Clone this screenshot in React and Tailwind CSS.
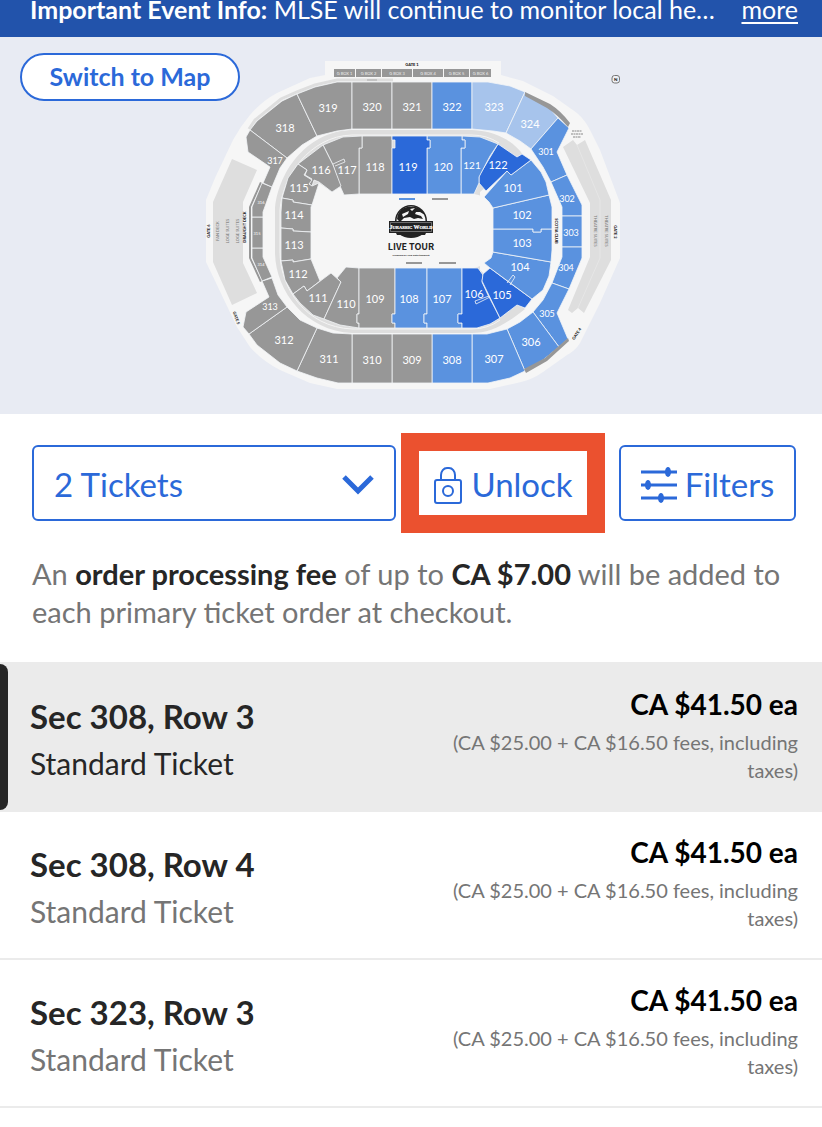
import React from "react";

const GREY = "#979797";
const BLUE = "#5a92df";
const DEEP = "#2b69d9";
const PALE = "#a7c4ec";

const sections = [
  ["318", GREY, "250,130 257,121 282,101 297,94 317,136 302,145 287,158", 285, 132],
  ["319", GREY, "297,94 315,87 337,82 352,82 352,129 337,131 317,136", 328, 112],
  ["320", GREY, "352,82 392,82 392,129 352,129", 372, 111],
  ["321", GREY, "392,82 432,82 432,129 392,129", 412, 111],
  ["322", BLUE, "432,82 472,82 472,129 432,129", 452, 111],
  ["323", PALE, "472,82 488,82 510,86 525,92 506,133 493,131 472,129", 494, 111],
  ["324", PALE, "525,92 546,104 558,118 531,149 520,141 506,133", 530, 128],
  ["301", BLUE, "558,118 569,128 557,152 567,175 551,182 543,167 531,149", 546, 155, 9],
  ["302", BLUE, "567,175 582,205 582,216 562,216 562,207 551,182", 567, 202, 9],
  ["303", BLUE, "562,216 582,216 582,247 562,247", 571, 236, 9],
  ["304", BLUE, "562,247 582,247 582,258 569,289 552,283 562,257", 566, 271, 9],
  ["305", BLUE, "552,283 569,289 557,313 568,339 559,347 533,312 543,300", 547, 317, 9],
  ["306", BLUE, "533,312 559,347 543,360 525,371 507,329 520,322", 531, 346],
  ["307", BLUE, "507,329 525,371 510,378 488,383 472,383 472,334 487,334", 494, 363],
  ["308", BLUE, "432,334 472,334 472,383 432,383", 452, 364],
  ["309", GREY, "392,334 432,334 432,383 392,383", 412, 364],
  ["310", GREY, "352,334 392,334 392,383 352,383", 372, 364],
  ["311", GREY, "352,334 352,383 338,383 317,378 297,371 317,328 333,333", 329, 363],
  ["312", GREY, "249,334 257,345 280,363 297,371 317,328 300,320 287,307", 284, 344],
  ["313", GREY, "249,334 243,327 246,312 269,297 262,281 272,278 278,295 287,307", 270, 310, 9],
  ["314", GREY, "252,248 263,248 263,257 272,277 262,281 252,258", 261, 266, 4],
  ["315", GREY, "252,217 263,217 263,248 252,248", 257, 235, 4],
  ["316", GREY, "252,217 252,207 262,183 272,187 263,212 263,217", 261, 204, 4],
  ["317", GREY, "250,130 246,137 248,152 270,167 263,183 272,187 280,168 287,158", 275, 164, 9],
  ["118", GREY, "362,136 392,136 392,194 359,194 359,148 362,148", 375, 171],
  ["117", GREY, "323,145 343,137 362,136 362,148 359,148 359,194 344,195 340,186 333,165", 347, 174],
  ["116", GREY, "298,164 323,145 333,165 341,186 332,192 319,182 314,180 312,186 309,184 312,179 305,175 307,170", 321, 174],
  ["115", GREY, "298,164 307,170 304,175 312,180 309,184 312,186 319,183 312,205 293,202 293,200 282,198 288,178", 299, 192],
  ["114", GREY, "282,198 293,200 293,202 312,205 311,207 311,232 293,231 293,229 281,228 281,212", 294, 219],
  ["113", GREY, "281,228 293,229 293,231 311,232 311,259 293,262 293,260 281,261", 294, 249],
  ["112", GREY, "281,261 293,260 293,262 311,259 320,281 307,291 304,286 293,294 285,280", 298, 278],
  ["111", GREY, "293,294 304,286 307,291 331,273 341,282 324,319 313,315 300,303", 318, 302],
  ["110", GREY, "341,282 337,278 346,267 359,268 359,314 357,314 357,323 359,323 359,328 340,325 324,319", 346, 308],
  ["109", GREY, "359,268 395,268 395,314 392,314 392,323 395,323 395,328 359,328 359,323 357,323 357,314 359,314", 375, 303],
  ["108", BLUE, "395,268 427,268 427,314 424,314 424,323 427,323 427,328 395,328 395,323 392,323 392,314 395,314", 409, 303],
  ["107", BLUE, "427,268 462,268 462,314 458,314 458,323 462,323 462,328 427,328 427,323 424,323 424,314 427,314", 442, 303],
  ["106", DEEP, "462,268 478,268 483,275 482,282 488,295 500,318 490,324 477,328 462,328 462,323 458,323 458,314 462,314", 474, 298],
  ["105", DEEP, "490,268 483,274 482,281 500,318 517,305 525,308 532,299 510,283", 502, 299],
  ["104", BLUE, "493,252 551,262 549,276 543,290 532,299 490,268 484,263 491,258", 520, 271],
  ["103", BLUE, "493,229 533,229 533,232 541,232 541,229 552,229 552,250 551,262 493,252", 522, 247],
  ["102", BLUE, "493,208 549,195 552,207 552,229 541,229 541,232 533,232 533,229 493,229", 522, 219],
  ["101", BLUE, "484,197 507,171 511,175 531,160 541,172 546,182 549,195 493,208 489,202", 513, 192],
  ["122", DEEP, "498,144 517,157 522,154 531,160 511,175 507,171 486,191 479,183 479,176", 498, 169],
  ["121", BLUE, "462,136 480,137 498,144 490,156 479,177 479,183 474,194 461,194 461,148 465,148 465,140 462,140", 472, 169, 10],
  ["120", BLUE, "427,136 462,136 462,140 465,140 465,148 461,148 461,194 427,194 427,148 430,148 430,140 427,140", 443, 171],
  ["119", DEEP, "392,136 427,136 427,140 430,140 430,148 427,148 427,194 392,194 392,148 395,148 395,140 392,140", 408, 171],
];

const boxes = [
  ["G BOX 1", 334, 355],
  ["G BOX 2", 356, 381],
  ["G BOX 3", 382, 412],
  ["G BOX 4", 413, 443],
  ["G BOX 5", 444, 469],
  ["G BOX 6", 470, 491],
];

function SideLabel({ x, y, turn = -90, fill = "#222", children, size = 4, weight = 900 }) {
  return (
    <text x={x} y={y} fontSize={size} fontWeight={weight} fill={fill} textAnchor="middle" dominantBaseline="middle" transform={`rotate(${turn} ${x} ${y})`}>
      {children}
    </text>
  );
}

function SeatMap() {
  return (
    <svg viewBox="0 37 822 377" className="block w-full font-['Lato',sans-serif]" role="img" aria-label="Seat map">
      <path fill="#f6f6f6" d="M206,200 L215,178 233,140 Q240,127 250,115 Q262,101 277,93 L310,78 325,75 V61 H501 V75 L523,81 553,96 577,113 Q585,120 590,130 L600,150 620,203 V258 L600,303 580,343 Q575,351 567,355 L543,372 Q532,380 517,383 L490,389 H337 L310,383 280,370 Q262,361 250,347 L237,327 206,262 Z" />
      <path fill="#dedede" d="M232,159 L257,170 243,202 V263 L257,293 232,305 213,262 V202 Z M563,147 L573,140 577,145 585,140 611,200 V260 L584,313 578,308 572,313 568,310 590,257 V203 Z" />
      <path d="M577,145 L600,200 V258 L578,308" fill="none" stroke="#e6e6e6" />
      <path d="M249,129 L255,120 281,99 297,92 315,85 337,80 H393" fill="none" stroke="#dedede" strokeWidth="3" />
      <path fill="#dedede" d="M352,130 H472 C498,131 515,143 523,155 L517,160 480,192 V270 L525,309 C505,325 490,333 472,333 H352 C305,331 275,290 275,252 V210 C277,175 305,131 352,130 Z" />
      <path d="M352,135 H472 Q487,135 499,143 M500,320 Q488,329 472,329 H352 C305,327 280,287 280,252 V210 C282,178 309,136 352,135" fill="none" stroke="#f4f4f4" />
      <path fill="#f6f6f6" d="M344,194 H474 Q493,197 493,215 V247 Q493,264 474,268 H346 L337,278 331,273 320,281 Q311,270 311,257 V207 Q312,195 319,183 L332,192 340,187 Z" />
      <path fill="#979797" d="M249,207 L260,182 262,183 251,207 V258 L262,281 260,282 249,258 Z" />

      {sections.map(([name, fill, points]) => (
        <polygon key={name} points={points} fill={fill} stroke="#f3f5f8" strokeWidth="0.8" />
      ))}
      <path fill="#979797" d="M525,92 L550,104 Q561,111 570,123 L568,127 Q558,115 547,108 L525,96 Z M524,369 L545,358 568,338 569,341 547,361 526,373 Z" />
      <path d="M333,164 L344,159 345,162 335,166 M490,297 L476,304 475,301 489,296 M507,283 L513,275 515,277 510,285" fill="none" stroke="#f3f5f8" strokeWidth="0.8" />
      {sections.map(([name, , , x, y, size = 11]) => (
        <text key={name} x={x} y={y} fontSize={size} fill="#fff" textAnchor="middle">
          {name}
        </text>
      ))}

      {boxes.map(([name, left, right]) => (
        <g key={name}>
          <rect x={left} y="69" width={right - left} height="8" fill="#979797" />
          <text x={(left + right) / 2} y="75" fontSize="4" fill="#f0f0f0" textAnchor="middle">{name}</text>
        </g>
      ))}
      <text x="412" y="66" fontSize="4" fontWeight="900" fill="#222" textAnchor="middle">GATE 1</text>
      <path d="M367,80 H377" stroke="#aaa" />

      <SideLabel x={209} y={231}>GATE 6</SideLabel>
      <SideLabel x={218} y={231} fill="#777" weight={400}>FAN DECK</SideLabel>
      <SideLabel x={228} y={231} fill="#777" weight={400}>LOGE SUITES</SideLabel>
      <SideLabel x={238} y={231} fill="#777" weight={400}>LOGE SUITES</SideLabel>
      <SideLabel x={245} y={227}>DRAUGHT DECK</SideLabel>
      <SideLabel x={236} y={318} turn={70}>GATE 5</SideLabel>
      <SideLabel x={556} y={231} turn={90}>SCOTIA CLUB</SideLabel>
      <SideLabel x={595} y={231} turn={90} fill="#777" weight={400}>THEATRE SUITES</SideLabel>
      <SideLabel x={606} y={231} turn={90} fill="#777" weight={400}>THEATRE SUITES</SideLabel>
      <SideLabel x={615} y={232} turn={90}>GATE 2</SideLabel>
      <SideLabel x={577} y={334} turn={-57}>GATE 4</SideLabel>
      <path d="M572,131 H582 M571,134 H583 M573,137 H581" stroke="#888" strokeDasharray="2 0.5" />

      <rect x="399" y="198" width="16" height="2" fill={BLUE} />
      <path d="M432,199 H448 M406,263 H422 M439,263 H456" stroke="#979797" strokeWidth="2" />

      <g>
        <circle cx="411" cy="221" r="16" fill="#222" />
        <circle cx="411" cy="221" r="14.500" fill="#f6f6f6" />
        <path fill="#222" d="M397,219 C398,210 405,206 411,207 C417,206 422,209 425,215 L420,212 416,212 415,214 421,216 423,219 418,218 414,219 410,217 404,218 400,222 Z M399,234 H423 Q418,238 411,238 Q404,238 399,234 Z" />
        <path fill="#f6f6f6" d="M410,209 L415,208 412,211 Z M402,214 L409,211 408,214 403,217 Z" />
        <path fill="#222" d="M389,221 H433 V233 H426 L425,235 H397 L396,233 H389 Z" />
        <path d="M390.500,222.500 H431.500 V231.500 H390.500 Z" fill="none" stroke="#bbb" strokeWidth="0.5" />
        <text x="411" y="229" textAnchor="middle" fill="#fff" stroke="#fff" strokeWidth="0.2" fontSize="4.500" fontWeight="700" className="font-['Liberation_Serif',serif]">
          <tspan fontSize="6">J</tspan>URASSIC <tspan fontSize="6">W</tspan>ORLD
        </text>
        <text x="411" y="250" fill="#222" textAnchor="middle" fontSize="9" fontWeight="700" className="font-['Liberation_Sans_Narrow','Noto_Sans_CJK_SC',sans-serif]">LIVE TOUR</text>
        <text x="411" y="256" fill="#222" fontSize="2.600" fontWeight="700" textAnchor="middle">Produced by Feld Entertainment</text>
      </g>

      <rect x="612" y="75.500" width="7.500" height="7.500" rx="2.500" fill="#eef0f4" stroke="#777" />
      <text x="615.700" y="81" fontSize="4.500" fontWeight="900" fill="#222" textAnchor="middle">N</text>
    </svg>
  );
}

const tickets = [
  { seat: "Sec 308, Row 3", selected: true },
  { seat: "Sec 308, Row 4" },
  { seat: "Sec 323, Row 3" },
];

function TicketRow({ seat, selected }) {
  return (
    <li className={selected ? "relative border-b-2 border-[#ebebeb] bg-[#ebebeb]" : "border-b-2 border-[#ebebeb]"}>
      {selected && <span className="absolute inset-y-0 left-0 w-2 rounded-r-lg bg-[#262626]" />}
      <div className="flex justify-between pt-5 pr-6 pb-[26px] pl-[30px]">
        <div className="pt-3">
          <h2 className="text-[33px] leading-10 font-bold text-[#262626]">{seat}</h2>
          <p className={selected ? "mt-[7px] text-[30px] leading-10 text-[#262626]" : "mt-[7px] text-[30px] leading-10 text-[#757575]"}>Standard Ticket</p>
        </div>
        <div className="w-[370px] text-right">
          <p className="text-[28px] leading-10 font-bold text-black">CA $41.50 ea</p>
          <p className="mt-1 text-xl leading-7 text-[#757575]">(CA $25.00 + CA $16.50 fees, including taxes)</p>
        </div>
      </div>
    </li>
  );
}

export default function App() {
  return (
    <div className="min-h-screen bg-white font-['Lato',sans-serif]">
      <header className="flex h-[37px] items-end justify-between gap-5 overflow-hidden bg-[#2253ab] pr-6 pb-[10px] pl-[30px] text-[25px] leading-9 text-white">
        <p className="truncate">
          <strong>Important Event Info:</strong> MLSE will continue to monitor local health guidelines
        </p>
        <a href="#more" className="underline underline-offset-3">more</a>
      </header>

      <section className="relative bg-[#e8ebf3]">
        <SeatMap />
        <button type="button" className="absolute top-4 left-5 h-12 w-[220px] rounded-full border-2 border-[#2b69d9] bg-white text-[25px] font-bold text-[#2b69d9]">
          Switch to Map
        </button>
      </section>

      <main>
        <div className="flex items-center pt-[19px] pr-[26px] pl-8 text-[33px] text-[#2b69d9]">
          <div className="relative flex-1">
            <select aria-label="Number of tickets" defaultValue="2" className="block h-[76px] w-full appearance-none rounded-md border-2 border-[#2b69d9] bg-white pt-1 pl-5">
              <option value="1">1 Ticket</option>
              <option value="2">2 Tickets</option>
              <option value="3">3 Tickets</option>
            </select>
            <svg viewBox="0 0 32 20" className="pointer-events-none absolute top-[30px] right-[22px] h-5 w-8" fill="none" stroke="currentColor" strokeWidth="5">
              <path d="M2 2 L16 16 L30 2" />
            </svg>
          </div>
          <div className="ml-[5px] border-18 border-[#eb512f]">
            <button type="button" className="flex h-16 w-[168px] items-center justify-center gap-2 pt-1">
              <svg viewBox="0 0 30 38" className="h-[38px] w-[30px] shrink-0" fill="none" stroke="currentColor" strokeWidth="2">
                <rect x="2" y="14" width="26" height="23" rx="2" />
                <path d="M8 14 V9 a6 7 0 0 1 6 -7 h2 a6 7 0 0 1 6 7 V14" />
                <circle cx="15" cy="25" r="5" />
              </svg>
              Unlock
            </button>
          </div>
          <button type="button" className="ml-[14px] flex h-[76px] w-[177px] items-center justify-center gap-2 rounded-md border-2 border-[#2b69d9] pt-1">
            <svg viewBox="0 0 36 36" className="size-9 shrink-0" fill="currentColor">
              <path d="M0 3.500 H36 V6.500 H0 Z M0 16.500 H36 V19.500 H0 Z M0 29.500 H36 V32.500 H0 Z" />
              <ellipse cx="27" cy="5" rx="3" ry="5" />
              <ellipse cx="7" cy="18" rx="3" ry="5" />
              <ellipse cx="20" cy="31" rx="3" ry="5" />
            </svg>
            Filters
          </button>
        </div>

        <p className="mt-[22px] pr-6 pl-8 text-[29px] leading-[38px] text-[#757575]">
          An <strong className="text-[#262626]">order processing fee</strong> of up to <strong className="text-[#262626]">CA $7.00</strong> will be added to each primary ticket order at checkout.
        </p>

        <ul className="mt-[31px] border-t-2 border-[#ebebeb]">
          {tickets.map((ticket) => (
            <TicketRow key={ticket.seat} {...ticket} />
          ))}
        </ul>
      </main>
    </div>
  );
}
